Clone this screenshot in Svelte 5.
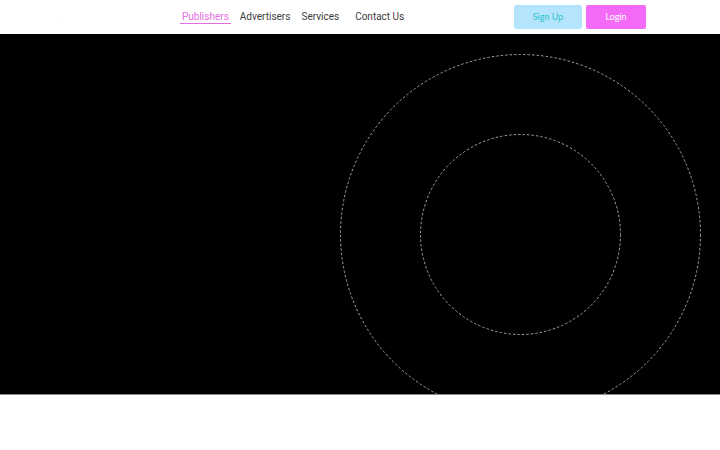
<script lang="ts">
	const links = [
		{ name: 'Publishers', href: '#publishers' },
		{ name: 'Advertisers', href: '#advertisers' },
		{ name: 'Services', href: '#services' },
		{ name: 'Contact Us', href: '#contact' }
	]

	let current_page = $state('Publishers')
</script>

<header>
	<a class="logo" href="/" aria-label="Home"><span></span></a>
	<nav>
		{#each links as link}
			<a
				href={link.href}
				class:current={current_page == link.name}
				class:last={link.name == 'Contact Us'}
				onclick={() => (current_page = link.name)}>{link.name}</a>
		{/each}
	</nav>
	<div class="actions">
		<button class="signup">Sign Up</button>
		<button class="login">Login</button>
	</div>
</header>

<main>
	<section class="hero">
		<svg class="rings" viewBox="0 0 361 361" aria-hidden="true">
			<circle cx="180.5" cy="180.5" r="180" />
			<circle cx="180.5" cy="180.5" r="100" />
		</svg>
	</section>
</main>

<style>
	:global(body) {
		margin: 0;
		background: #fff;
		font-family: Roboto, Lato, sans-serif;
	}
	header {
		display: flex;
		align-items: center;
		height: 34px;
		background: #fff;
	}
	.logo {
		box-sizing: border-box;
		width: 25%;
		padding-left: 58px;
	}
	.logo span {
		display: block;
		width: 2px;
		height: 2px;
		border-radius: 50%;
		background: #f4f4f4;
	}
	nav {
		display: flex;
		gap: 7px;
	}
	nav a {
		padding: 0 2px;
		border-bottom: 1px solid transparent;
		color: #3c3c3c;
		font-size: 10px;
		line-height: 13px;
		text-decoration: none;
		white-space: nowrap;
	}
	nav .current {
		border-color: #e56be0;
		color: #e56be0;
	}
	nav .last {
		margin-left: 5px;
	}
	.actions {
		display: flex;
		gap: 4px;
		margin-left: auto;
		padding-right: 74px;
	}
	button {
		height: 24px;
		padding: 0 0 1px;
		border: 0;
		border-radius: 2px;
		font-family: Lato, sans-serif;
		font-size: 9px;
		cursor: pointer;
	}
	.signup {
		width: 68px;
		background: #b5e5fc;
		color: #2bc4cf;
	}
	.login {
		width: 60px;
		background: #f569f7;
		color: #fff;
	}
	main {
		border-bottom: 1px solid #8a8a8a;
	}
	.hero {
		display: flex;
		justify-content: flex-end;
		align-items: flex-start;
		box-sizing: border-box;
		height: 80vh;
		padding: 20px 19px 0 0;
		overflow: hidden;
		background: #000;
	}
	.rings {
		flex: none;
		width: 361px;
		height: 361px;
	}
	.rings circle {
		fill: none;
		stroke: #a0a0a0;
		stroke-width: 1;
		stroke-dasharray: 2.5 2;
	}
</style>
